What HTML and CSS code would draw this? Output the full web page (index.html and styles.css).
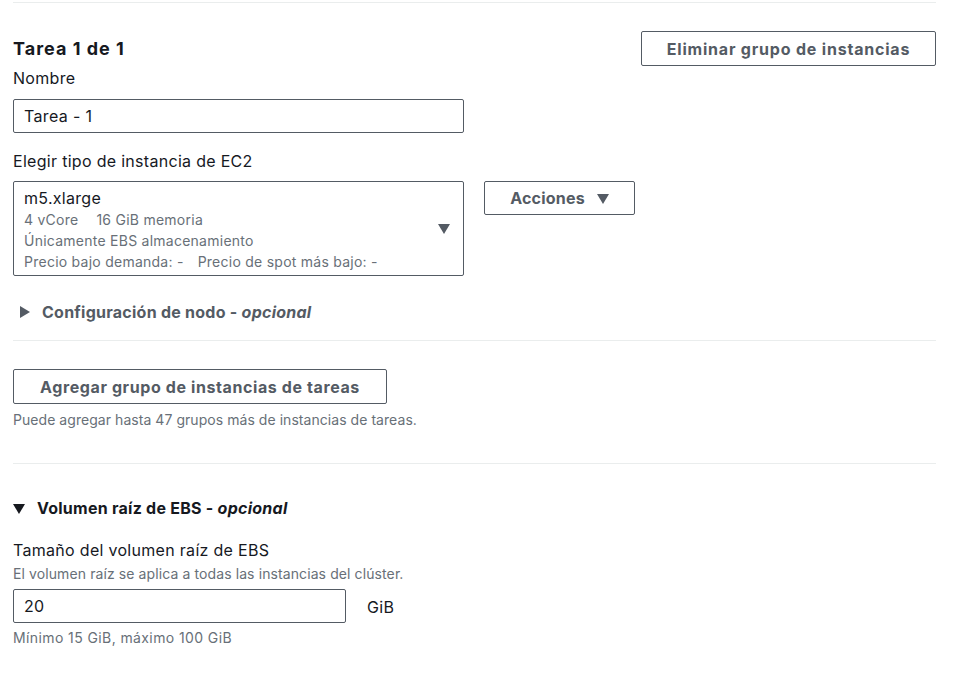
FILE: index.html
```html
<!DOCTYPE html>
<html lang="es">
<head>
<meta charset="utf-8">
<link rel="stylesheet" href="styles.css">
</head>
<body>
<div class="page">
  <hr class="divider top">
  <div class="task-head">
    <div class="task-left">
      <h2 class="task-title">Tarea 1 de 1</h2>
      <div class="label">Nombre</div>
      <div class="input wide"><span>Tarea - 1</span></div>
    </div>
    <button class="btn remove">Eliminar grupo de instancias</button>
  </div>

  <div class="label ec2-label">Elegir tipo de instancia de EC2</div>
  <div class="ec2-row">
    <div class="select">
      <div class="select-text">
        <div class="sel-main">m5.xlarge</div>
        <div class="sel-sub"><span class="gap">4 vCore</span>16 GiB memoria</div>
        <div class="sel-sub">Únicamente EBS almacenamiento</div>
        <div class="sel-sub"><span class="gap">Precio bajo demanda: -</span>Precio de spot más bajo: -</div>
      </div>
      <span class="caret-down"></span>
    </div>
    <button class="btn actions">Acciones <span class="caret-down small"></span></button>
  </div>

  <div class="expander gray">
    <span class="caret-right"></span>
    <span>Configuración de nodo - <em>opcional</em></span>
  </div>

  <hr class="divider mid">

  <button class="btn add">Agregar grupo de instancias de tareas</button>
  <div class="hint add-hint">Puede agregar hasta 47 grupos más de instancias de tareas.</div>

  <hr class="divider mid2">

  <div class="expander dark">
    <span class="caret-down dark-caret"></span>
    <span>Volumen raíz de EBS - <em>opcional</em></span>
  </div>

  <div class="label ebs-label">Tamaño del volumen raíz de EBS</div>
  <div class="hint desc">El volumen raíz se aplica a todas las instancias del clúster.</div>
  <div class="size-row">
    <div class="input size"><span>20</span></div>
    <span class="unit">GiB</span>
  </div>
  <div class="hint constraint">Mínimo 15 GiB, máximo 100 GiB</div>
</div>
</body>
</html>
```

FILE: styles.css
```css
* { box-sizing: border-box; }
html, body { margin: 0; padding: 0; background: #fff; }
body {
  font-family: Inter, "Open Sans", Arial, sans-serif;
  color: #16191f;
  font-size: 16px;
}
.page { padding: 0 17px 0 13px; }

.divider { border: 0; border-top: 1px solid #eaeded; margin: 0; }
.divider.top { margin-top: 2px; }

.task-head { display: flex; justify-content: space-between; align-items: flex-start; margin-top: 28px; }
.task-left { width: 451px; }
.task-title { font-size: 18px; font-weight: 700; margin: 0; line-height: 36px; height: 36px; letter-spacing: 1px; }

.label { font-size: 16px; line-height: 22px; color: #16191f; letter-spacing: 0.3px; }
.input {
  border: 1px solid #545b64;
  border-radius: 2px;
  height: 34px;
  display: flex; align-items: center;
  padding: 0 10px;
  font-size: 16px;
  letter-spacing: 0.35px;
}
.input.wide { margin-top: 10px; }

.btn {
  font-family: inherit;
  background: #fff;
  border: 1px solid #545b64;
  border-radius: 2px;
  color: #545b64;
  font-weight: 700;
  font-size: 16px;
  height: 35px;
  padding: 0;
  cursor: pointer;
}
.btn.remove { width: 295px; letter-spacing: 0.8px; }

.ec2-label { margin-top: 17px; }
.ec2-row { display: flex; align-items: flex-start; margin-top: 9px; gap: 20px; }
.select {
  width: 451px; height: 95px;
  border: 1px solid #545b64; border-radius: 2px;
  display: flex; align-items: center; justify-content: space-between;
  padding: 0 13px 0 10px;
}
.select-text { align-self: flex-start; padding-top: 5px; }
.sel-main { font-size: 16px; line-height: 22px; letter-spacing: 0.3px; }
.sel-sub { font-size: 14px; line-height: 21px; color: #687078; letter-spacing: 0.25px; }
.sel-sub .gap { margin-right: 14px; }
.sel-sub:nth-child(2) .gap { margin-right: 18px; }

.caret-down {
  display: inline-block; width: 0; height: 0;
  border-left: 6.5px solid transparent;
  border-right: 6.5px solid transparent;
  border-top: 10px solid #545b64;
  margin-top: 1px;
}
.caret-down.small { margin-left: 12px; vertical-align: 1px; }
.btn.actions { width: 151px; height: 34px; display: flex; align-items: center; justify-content: center; letter-spacing: 0.2px; }

.expander { display: flex; align-items: center; font-weight: 700; font-size: 16px; line-height: 22px; letter-spacing: 0.25px; }
.expander em { font-style: italic; }
.expander.gray { color: #545b64; margin-top: 25px; padding-left: 7px; }
.caret-right {
  width: 0; height: 0;
  border-top: 6.5px solid transparent;
  border-bottom: 6.5px solid transparent;
  border-left: 10px solid #545b64;
  margin-right: 12px;
}
.divider.mid { margin-top: 17px; }

.btn.add { margin-top: 28px; width: 374px; height: 35px; letter-spacing: 0.6px; }
.hint { font-size: 14px; line-height: 20px; color: #687078; letter-spacing: 0.05px; }
.add-hint { margin-top: 6px; }
.divider.mid2 { margin-top: 33px; }

.expander.dark { color: #16191f; margin-top: 33px; }
.dark-caret { border-top-color: #16191f; margin-right: 12px; margin-top: 2px; }

.ebs-label { margin-top: 20px; }
.desc { font-size: 14px; line-height: 18px; margin-top: 4px; letter-spacing: 0.1px; }
.size-row { display: flex; align-items: center; margin-top: 6px; }
.input.size { width: 333px; }
.unit { margin-left: 21px; margin-top: 2px; letter-spacing: 0.3px; }
.constraint { font-size: 14px; line-height: 18px; margin-top: 6px; letter-spacing: 0.4px; }
```
